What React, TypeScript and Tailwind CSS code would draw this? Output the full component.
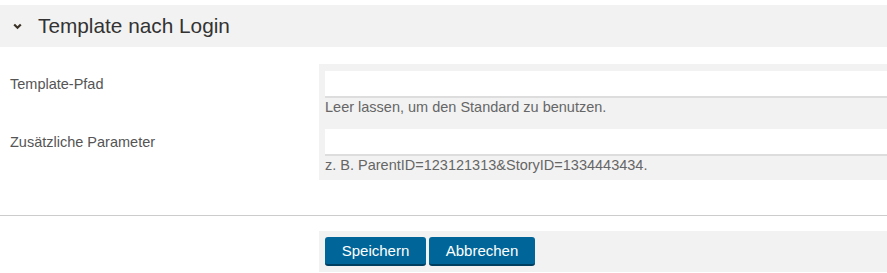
import React from "react";

export default function App() {
  return (
    <div className="w-[887px] h-[273px] bg-white font-['Liberation_Sans',Arial,sans-serif] overflow-hidden">
      <div className="h-[5px]" />
      <div className="h-[42px] bg-[#f2f2f2] flex items-center">
        <svg className="ml-[13px] mr-[16px] mt-[1px]" width="9" height="7" viewBox="0 0 9 7">
          <path d="M1.2 1.5 L4.5 4.8 L7.8 1.5" fill="none" stroke="#3a3226" strokeWidth="2.2" />
        </svg>
        <span className="text-[20.8px] text-[#333] leading-none">Template nach Login</span>
      </div>
      <div className="mt-[17px]">
        <div className="flex">
          <div className="w-[319px] pl-[10px] pt-[7px]">
            <div className="h-[27px] flex items-center text-[14.5px] text-[#555]">Template-Pfad</div>
          </div>
          <div className="flex-1 bg-[#f2f2f2] pl-[6px] pt-[7px] pb-[11px]">
            <div className="h-[27px] bg-white border-b-2 border-[#dddddd]" />
            <div className="h-[20px] flex items-center text-[14.5px] text-[#666]">
              Leer lassen, um den Standard zu benutzen.
            </div>
          </div>
        </div>
        <div className="flex">
          <div className="w-[319px] pl-[10px]">
            <div className="h-[27px] flex items-center text-[14.5px] text-[#555]">Zusätzliche Parameter</div>
          </div>
          <div className="flex-1 bg-[#f2f2f2] pl-[6px] pb-[4px]">
            <div className="h-[27px] bg-white border-b-2 border-[#dddddd]" />
            <div className="h-[20px] flex items-center text-[14.5px] text-[#666]">
              z. B. ParentID=123121313&amp;StoryID=1334443434.
            </div>
          </div>
        </div>
      </div>
      <div className="mt-[35px] h-px bg-[#cccccc]" />
      <div className="flex mt-[15px]">
        <div className="w-[319px]" />
        <div className="flex-1 h-[41px] bg-[#f2f2f2] pl-[6px] pt-[6px] flex items-start gap-[3px]">
          <button className="w-[101px] h-[29px] rounded-[3px] bg-[#006699] border-b-2 border-[#003f5f] text-white text-[15px] leading-none flex items-center justify-center">
            Speichern
          </button>
          <button className="w-[106px] h-[29px] rounded-[3px] bg-[#006699] border-b-2 border-[#003f5f] text-white text-[15px] leading-none flex items-center justify-center">
            Abbrechen
          </button>
        </div>
      </div>
    </div>
  );
}
